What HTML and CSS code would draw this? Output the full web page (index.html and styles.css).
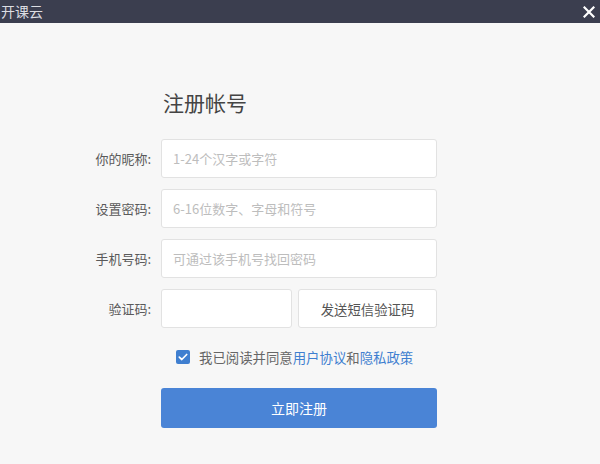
FILE: index.html
```html
<!DOCTYPE html>
<html lang="zh">
<head>
<meta charset="utf-8">
<title>开课云</title>
<link rel="stylesheet" href="styles.css">
</head>
<body>
<div class="titlebar">
  <span class="app-name">开课云</span>
  <span class="close">
    <svg width="12" height="12" viewBox="0 0 12 12"><path d="M1.5 1.5 L10.5 10.5 M10.5 1.5 L1.5 10.5" stroke="#fff" stroke-width="2.2" stroke-linecap="square"/></svg>
  </span>
</div>
<main class="content">
  <h1 class="heading">注册帐号</h1>
  <form class="form">
    <div class="row">
      <label class="label">你的昵称:</label>
      <input class="input" type="text" placeholder="1-24个汉字或字符">
    </div>
    <div class="row">
      <label class="label">设置密码:</label>
      <input class="input" type="text" placeholder="6-16位数字、字母和符号">
    </div>
    <div class="row">
      <label class="label">手机号码:</label>
      <input class="input" type="text" placeholder="可通过该手机号找回密码">
    </div>
    <div class="row">
      <label class="label">验证码:</label>
      <div class="code-group">
        <input class="input code-input" type="text">
        <button class="sms-btn" type="button">发送短信验证码</button>
      </div>
    </div>
    <div class="agree">
      <span class="checkbox">
        <svg width="10" height="8" viewBox="0 0 10 8"><path d="M1.3 4.2 L3.8 6.5 L8.7 1.5" fill="none" stroke="#fff" stroke-width="1.7" stroke-linecap="round" stroke-linejoin="round"/></svg>
      </span>
      <span class="agree-text">我已阅读并同意<a class="link">用户协议</a>和<a class="link">隐私政策</a></span>
    </div>
    <div class="submit-row">
      <button class="submit" type="button">立即注册</button>
    </div>
  </form>
</main>
</body>
</html>
```

FILE: styles.css
```css
* { box-sizing: border-box; }
html, body {
  margin: 0;
  padding: 0;
}
body {
  width: 600px;
  height: 464px;
  background: #f7f7f7;
  font-family: "Noto Sans CJK SC", "Noto Sans", sans-serif;
  overflow: hidden;
}
.titlebar {
  height: 23px;
  background: #3b3e4f;
  display: flex;
  align-items: center;
  justify-content: space-between;
  padding: 0 5px 0 1px;
}
.app-name {
  color: #dcdde2;
  font-size: 14px;
  line-height: 23px;
}
.close {
  display: flex;
  align-items: center;
}
.content {
  padding-top: 66px;
}
.heading {
  margin: 0 0 0 163px;
  font-size: 21px;
  font-weight: normal;
  color: #444;
  line-height: 28px;
  height: 28px;
  margin-top: -1px;
}
.form {
  margin-top: 23px;
  display: flex;
  flex-direction: column;
  gap: 11px;
}
.row {
  display: flex;
  align-items: center;
  gap: 10px;
}
.label {
  width: 151px;
  text-align: right;
  font-size: 13px;
  color: #5a5a5a;
}
.input {
  width: 276px;
  height: 39px;
  border: 1px solid #e2e2e2;
  border-radius: 3px;
  background: #fff;
  padding: 0 11px;
  font-family: inherit;
  font-size: 13px;
  color: #333;
  outline: none;
}
.input::placeholder {
  color: #bdbdbd;
}
.code-group {
  display: flex;
  gap: 6px;
  width: 276px;
}
.code-input {
  width: 131px;
}
.sms-btn {
  width: 139px;
  height: 39px;
  border: 1px solid #e2e2e2;
  border-radius: 3px;
  background: #fff;
  font-family: inherit;
  font-size: 13.4px;
  color: #555;
  padding: 0;
}
.agree {
  display: flex;
  align-items: center;
  margin-left: 176px;
  margin-top: 8px;
  height: 19px;
}
.checkbox {
  width: 14px;
  height: 14px;
  border-radius: 2px;
  background: #3f7fd0;
  display: flex;
  align-items: center;
  justify-content: center;
  margin-right: 9px;
}
.agree-text {
  font-size: 13.4px;
  color: #666;
}
.link {
  color: #3f7fd0;
  text-decoration: none;
}
.submit-row {
  margin-left: 161px;
  margin-top: 11px;
}
.submit {
  width: 276px;
  height: 40px;
  border: none;
  border-radius: 3px;
  background: #4a84d6;
  color: #fff;
  font-family: inherit;
  font-size: 14px;
  padding: 0;
}
```
